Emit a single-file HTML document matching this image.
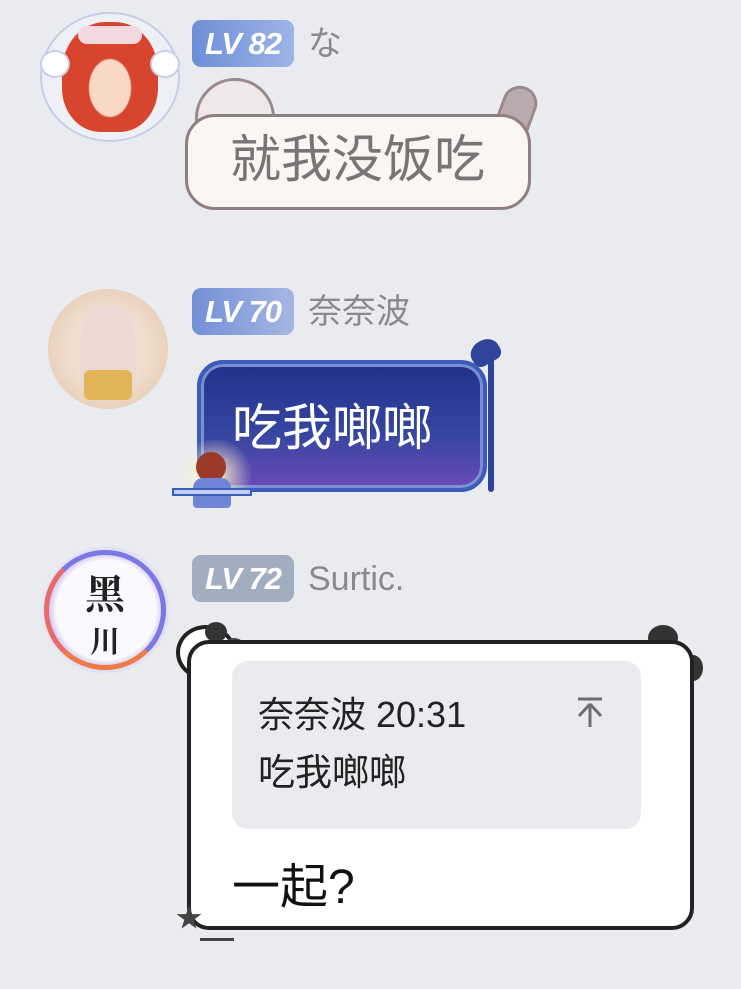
<!DOCTYPE html>
<html><head><meta charset="utf-8"><style>
*{margin:0;padding:0;box-sizing:border-box}
body{width:741px;height:989px;background:#e9ebef;position:relative;overflow:hidden;font-family:"Liberation Sans","Noto Sans CJK SC",sans-serif}
.a{position:absolute}
.lv{position:absolute;left:192px;width:102px;height:47px;border-radius:9px;color:#fff;font-weight:bold;font-style:italic;font-size:31px;line-height:47px;text-align:center;letter-spacing:-1px}
.nm{position:absolute;left:308px;font-size:34px;color:#8a8a8e;line-height:47px}
</style></head><body>
<!-- avatar 1 -->
<div class="a" style="left:40px;top:12px;width:140px;height:130px;border-radius:50%;background:#eef0f6;border:2px solid #c8cde6"></div>
<div class="a" style="left:62px;top:22px;width:96px;height:110px;border-radius:45% 45% 40% 40%;background:radial-gradient(ellipse at 50% 60%,#f8d8c4 0 30%,#d8452e 32%)"></div>
<div class="a" style="left:78px;top:26px;width:64px;height:18px;border-radius:10px;background:#f4d8df"></div>
<div class="a" style="left:40px;top:50px;width:30px;height:28px;border-radius:50%;background:#fff;border:2px solid #c8cde6"></div>
<div class="a" style="left:150px;top:50px;width:30px;height:28px;border-radius:50%;background:#fff;border:2px solid #c8cde6"></div>
<div class="lv" style="top:20px;background:linear-gradient(90deg,#6d8fd8,#9db4e6)">LV 82</div>
<div class="nm" style="top:21px">な</div>
<!-- cat bubble -->
<div class="a" style="left:195px;top:78px;width:80px;height:60px;border-radius:40px 40px 10px 10px;background:#efe7e8;border:3px solid #9a8a8e"></div>
<div class="a" style="left:498px;top:85px;width:35px;height:60px;border-radius:18px;background:#b9aaae;border:3px solid #9a8a8e;transform:rotate(20deg)"></div>
<div class="a" style="left:185px;top:114px;width:346px;height:96px;border-radius:30px;background:#fbf5f4;border:3px solid #8f7f83"></div>
<div class="a" style="left:230px;top:128px;font-size:51px;color:#7a7476;line-height:64px">就我没饭吃</div>
<!-- avatar 2 -->
<div class="a" style="left:48px;top:289px;width:120px;height:120px;border-radius:50%;background:radial-gradient(ellipse at 50% 50%,#f1e0d2 0 40%,#e9d2bd 70%,#e3c7ae)"></div>
<div class="a" style="left:80px;top:305px;width:56px;height:90px;border-radius:40% 40% 20% 20%;background:#ecd9d4"></div>
<div class="a" style="left:84px;top:370px;width:48px;height:30px;background:#e2b458;border-radius:6px"></div>
<div class="lv" style="top:288px;background:linear-gradient(90deg,#7290d6,#a6b6e4)">LV 70</div>
<div class="nm" style="top:289px">奈奈波</div>
<!-- blue bubble -->
<div class="a" style="left:470px;top:340px;width:30px;height:24px;border-radius:50% 50% 8px 8px;background:#2f4599;transform:rotate(-30deg)"></div>
<div class="a" style="left:488px;top:350px;width:6px;height:142px;background:#2f4599;border-radius:3px"></div>
<div class="a" style="left:197px;top:360px;width:290px;height:132px;border-radius:26px;background:linear-gradient(180deg,#22308a 0%,#3546a0 55%,#6a4ab8 100%);border:4px solid #3b5cb8;box-shadow:inset 0 0 0 3px #7b8fd2"></div>
<div class="a" style="left:232px;top:396px;font-size:50px;color:#fff;line-height:64px">吃我啷啷</div>
<div class="a" style="left:175px;top:440px;width:80px;height:70px;border-radius:50%;background:radial-gradient(circle,#fff6c8 0,rgba(255,240,180,0) 70%)"></div>
<div class="a" style="left:196px;top:452px;width:30px;height:30px;border-radius:50%;background:#9c3a2a"></div>
<div class="a" style="left:193px;top:478px;width:38px;height:30px;border-radius:10px 10px 4px 4px;background:#6f86d6"></div>
<div class="a" style="left:172px;top:488px;width:80px;height:8px;background:#c3cdf0;border:2px solid #3b5cb8"></div>
<!-- avatar 3 -->
<div class="a" style="left:42px;top:546px;width:128px;height:128px;border-radius:50%;background:radial-gradient(circle,#fbf9fd 0 55%,#d6cdf4 62%,rgba(233,235,239,0) 72%)"></div>
<div class="a" style="left:44px;top:550px;width:122px;height:120px;border-radius:50%;border:5px solid #7b78e6;border-bottom-color:#f07a44;border-left-color:#e96a6a"></div>
<div class="a" style="left:80px;top:570px;font-size:40px;color:#222;font-weight:bold;font-family:'Noto Serif CJK SC',serif;line-height:44px;width:50px;text-align:center">黑<br><span style="font-size:30px">川</span></div>
<div class="lv" style="top:555px;background:#a3adc0">LV 72</div>
<div class="nm" style="top:556px">Surtic.</div>
<!-- panda bubble -->
<div class="a" style="left:176px;top:625px;width:60px;height:55px;border-radius:50%;background:#fff;border:4px solid #222"></div>
<div class="a" style="left:205px;top:622px;width:22px;height:20px;border-radius:50%;background:#333"></div>
<div class="a" style="left:222px;top:638px;width:24px;height:22px;border-radius:50%;background:#444"></div>
<div class="a" style="left:648px;top:625px;width:30px;height:26px;border-radius:50%;background:#333"></div>
<div class="a" style="left:683px;top:655px;width:20px;height:26px;border-radius:50%;background:#333"></div>
<div class="a" style="left:187px;top:640px;width:507px;height:290px;border-radius:22px;background:#fff;border:4px solid #222"></div>
<div class="a" style="left:232px;top:661px;width:409px;height:168px;border-radius:16px;background:#e9ebee"></div>
<div class="a" style="left:258px;top:693px;font-size:36px;color:#222;line-height:44px">奈奈波 20:31</div>
<div class="a" style="left:258px;top:751px;font-size:37px;color:#222;line-height:44px">吃我啷啷</div>
<svg class="a" style="left:572px;top:694px" width="36" height="36" viewBox="0 0 36 36"><path d="M6 5H30M18 10V33M18 10L7 22M18 10L29 22" stroke="#6e6e72" stroke-width="3" fill="none"/></svg>
<div class="a" style="left:232px;top:860px;font-size:48px;color:#111;line-height:56px">一起?</div>
<div class="a" style="left:176px;top:905px;width:26px;height:26px;background:#444;clip-path:polygon(50% 0,61% 35%,98% 35%,68% 57%,79% 91%,50% 70%,21% 91%,32% 57%,2% 35%,39% 35%)"></div>
<div class="a" style="left:200px;top:938px;width:34px;height:3px;background:#444"></div>
</body></html>
